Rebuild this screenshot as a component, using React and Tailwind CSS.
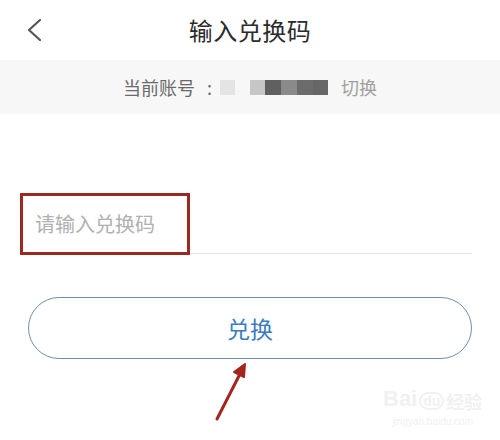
import React from 'react';

const cjk = { fontFamily: '"Noto Sans CJK SC", "Noto Sans", sans-serif' };

const App = () => {
    return (
        <div className="relative w-[500px] h-[440px] bg-white overflow-hidden" style={cjk}>
            {/* 顶部标题栏 */}
            <div className="relative h-[60px] flex items-center justify-center">
                <svg className="absolute left-[24px] top-[16px]" width="22" height="28" viewBox="0 0 22 28">
                    <path d="M16 4 L5 14 L16 24" fill="none" stroke="#555" strokeWidth="2.2" strokeLinecap="round" strokeLinejoin="round" />
                </svg>
                <h1 className="text-[24px] leading-none text-[#2b2b2b] tracking-[0.5px]">输入兑换码</h1>
            </div>

            {/* 当前账号 */}
            <div className="h-[54px] bg-[#f7f7f7] flex items-center pl-[123px] text-[18px] leading-none">
                <span className="text-[#6a6a6a]">当前账号</span>
                <span className="ml-[12px] text-[#6a6a6a]">:</span>
                <span className="ml-[8px] w-[15px] h-[15px] bg-[#e4e4e4]" />
                <span className="ml-[15px] flex h-[15px]">
                    <span className="w-[15px] bg-[#c6c6c6]" />
                    <span className="w-[16px] bg-[#606060]" />
                    <span className="w-[16px] bg-[#8a8a8a]" />
                    <span className="w-[16px] bg-[#6c6c6c]" />
                    <span className="w-[15px] bg-[#676767]" />
                </span>
                <span className="ml-[13px] text-[#a0a0a0]">切换</span>
            </div>

            {/* 输入框 */}
            <div className="mt-[79px] ml-[20px] w-[452px] flex items-end">
                <div className="w-[170px] h-[62px] border-[3px] border-[#992a22] flex items-center pl-[12px]">
                    <span className="text-[20px] leading-none text-[#b0b0b0]">请输入兑换码</span>
                </div>
                <div className="flex-1 border-b border-[#e6e6e6] mb-[1px]" />
            </div>

            {/* 兑换按钮 */}
            <div className="mt-[42px] ml-[28px] w-[444px] h-[62px] rounded-full border border-[#6e90b3] flex items-center justify-center">
                <span className="text-[23px] leading-none text-[#3b7cbf]">兑换</span>
            </div>

            {/* 标注箭头 */}
            <svg className="absolute left-[205px] top-[358px]" width="50" height="66" viewBox="0 0 50 66">
                <path d="M12 61 L38 10" stroke="#a3251d" strokeWidth="3" strokeLinecap="round" />
                <path d="M40 6 L29 14 L39 19 Z" fill="#a3251d" stroke="#a3251d" strokeWidth="2" strokeLinejoin="round" />
            </svg>

            {/* 水印 */}
            <div className="absolute left-[383px] top-[388px] flex flex-col items-center text-[#f1f1f1]">
                <div className="flex items-end leading-none">
                    <span className="text-[22px] font-bold" style={{ fontFamily: '"Liberation Sans", sans-serif' }}>Bai</span>
                    <span className="text-[14px] font-bold mx-[2px] px-[2px] rounded-full border-2 border-[#f1f1f1]" style={{ fontFamily: '"Liberation Sans", sans-serif' }}>du</span>
                    <span className="text-[18px] font-bold">经验</span>
                </div>
                <span className="text-[10px] mt-[4px]" style={{ fontFamily: '"Liberation Sans", sans-serif' }}>jingyan.baidu.com</span>
            </div>
        </div>
    );
};

export default App;
